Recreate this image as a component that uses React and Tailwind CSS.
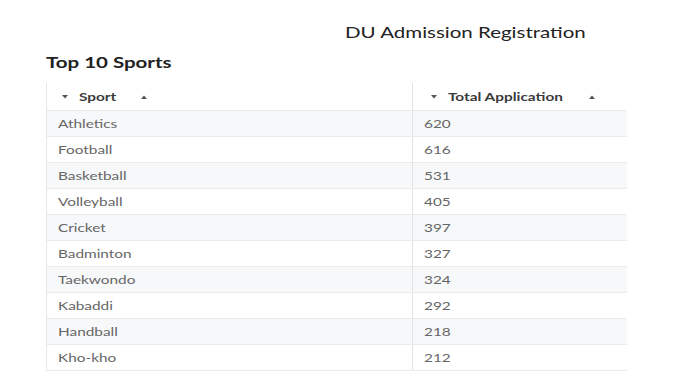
const sports = [
  { name: "Athletics", total: 620 },
  { name: "Football", total: 616 },
  { name: "Basketball", total: 531 },
  { name: "Volleyball", total: 405 },
  { name: "Cricket", total: 397 },
  { name: "Badminton", total: 327 },
  { name: "Taekwondo", total: 324 },
  { name: "Kabaddi", total: 292 },
  { name: "Handball", total: 218 },
  { name: "Kho-kho", total: 212 },
]

// the screenshot is stretched sideways, so text is widened with scale-x
function Wide({ children }) {
  return <span className="inline-block origin-left scale-x-[1.28] whitespace-nowrap">{children}</span>
}

function Caret({ up }) {
  return (
    <svg width="6" height="4" viewBox="0 0 6 4" className="shrink-0">
      <path d={up ? "M0 4 L3 0.5 L6 4 Z" : "M0 0 L3 3.5 L6 0 Z"} fill="#555" />
    </svg>
  )
}

function SortHeader({ label, pad, textW }) {
  return (
    <div className={`flex items-center h-[27px] ${pad}`}>
      <Caret />
      <span className={`ml-[11px] ${textW} text-[12px] font-bold text-[#3a3a3a]`}>
        <Wide>{label}</Wide>
      </span>
      <Caret up />
    </div>
  )
}

export default function App() {
  return (
    <div className="w-[680px] h-[380px] bg-white font-['Lato',sans-serif] overflow-hidden">
      <h1 className="pl-[345px] pt-[22px] text-[16px] leading-[19px] text-[#222]">
        <Wide>DU Admission Registration</Wide>
      </h1>

      <h2 className="pl-[46px] mt-[11px] text-[16px] leading-[19px] font-bold text-[#222]">
        <Wide>Top 10 Sports</Wide>
      </h2>

      <div className="ml-[46px] mt-[12px] w-[581px] border-l border-[#e6e6e6]">
        <div className="grid grid-cols-[366px_214px] border-b border-[#ebebeb]">
          <div className="border-r border-[#e3e3e3]">
            <SortHeader label="Sport" pad="pl-[15px]" textW="w-[62px]" />
          </div>
          <SortHeader label="Total Application" pad="pl-[18px]" textW="w-[141px]" />
        </div>
        {sports.map((s, i) => (
          <div
            key={s.name}
            className={`grid grid-cols-[366px_214px] border-b border-[#ebebeb] ${i % 2 === 0 ? "bg-[#f7f8f9]" : "bg-white"}`}
          >
            <div className="h-[25px] flex items-center pl-[11px] border-r border-[#e3e3e3] text-[12px] text-[#666]">
              <Wide>{s.name}</Wide>
            </div>
            <div className="h-[25px] flex items-center pl-[11px] text-[12px] text-[#666]">
              <Wide>{s.total}</Wide>
            </div>
          </div>
        ))}
      </div>
    </div>
  )
}
